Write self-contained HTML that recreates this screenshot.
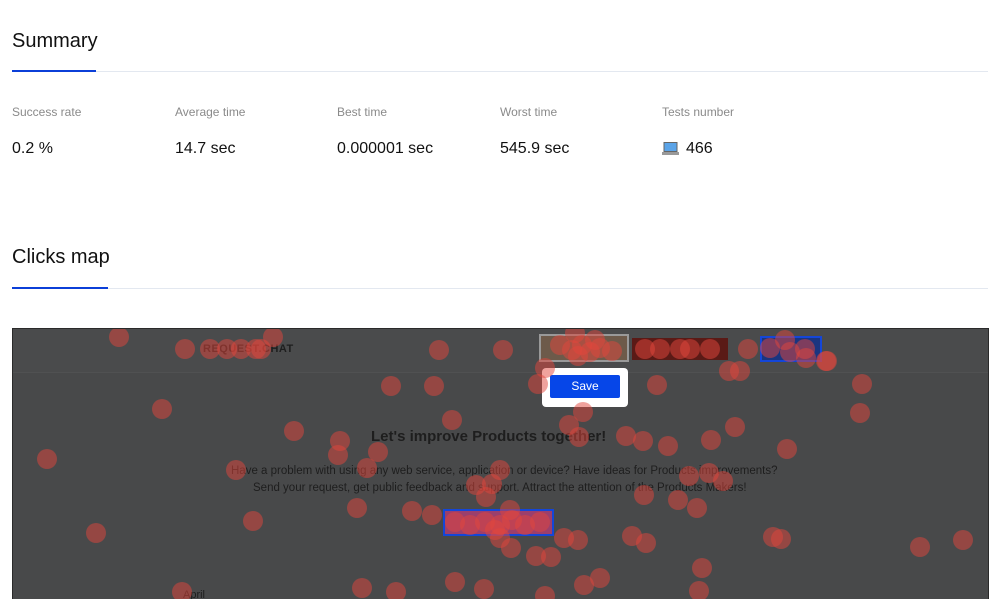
<!DOCTYPE html>
<html><head><meta charset="utf-8">
<style>
*{margin:0;padding:0;box-sizing:border-box}
html,body{width:1000px;height:599px;overflow:hidden}
body{background:#fff;font-family:"Liberation Sans",Arial,sans-serif;position:relative}
.abs{position:absolute}
h2{position:absolute;font-weight:400;font-size:20px;color:#111;left:12px}
.line{position:absolute;left:12px;width:976px;height:1px;background:#e3e8f0}
.ul{position:absolute;left:12px;height:2px;background:#0b3fd8}
.lab{position:absolute;top:105px;font-size:12px;color:#8a8a8a}
.val{position:absolute;top:140px;font-size:16px;color:#111}
#map{position:absolute;left:12px;top:328px;width:977px;height:271px;background:#48494a;border:1px solid #2a2a2a;border-bottom:none;overflow:hidden}
.t{position:absolute;color:#1e1e1e;white-space:nowrap}
</style></head><body>
<h2 style="top:30px">Summary</h2>
<div class="line" style="top:71px"></div><div class="ul" style="top:70px;width:84px"></div>
<div class="lab" style="left:12px">Success rate</div>
<div class="lab" style="left:175px">Average time</div>
<div class="lab" style="left:337px">Best time</div>
<div class="lab" style="left:500px">Worst time</div>
<div class="lab" style="left:662px">Tests number</div>
<div class="val" style="left:12px">0.2 %</div>
<div class="val" style="left:175px">14.7 sec</div>
<div class="val" style="left:337px">0.000001 sec</div>
<div class="val" style="left:500px">545.9 sec</div>
<svg class="abs" style="left:662px;top:142px" width="17" height="13" viewBox="0 0 17 13"><rect x="2" y="0.5" width="13" height="9" fill="#5ba4e8" stroke="#666"/><rect x="0" y="10" width="17" height="3" fill="#999"/></svg>
<div class="val" style="left:686px">466</div>

<h2 style="top:246px">Clicks map</h2>
<div class="line" style="top:288px"></div><div class="ul" style="top:287px;width:96px"></div>

<div id="map">
<div class="abs" style="left:0;top:0;width:977px;height:44px;background:#4a4b4c;border-bottom:1px solid #505152"></div>
<div class="t" style="left:190px;top:14px;font-size:11px;font-weight:700;letter-spacing:.5px">REQUEST.CHAT</div>
<div class="abs" style="left:526px;top:5px;width:90px;height:28px;border:2px solid #999;background:#6d5a4a"></div>
<div class="abs" style="left:619px;top:9px;width:96px;height:22px;background:#5a1a16"></div>
<div class="abs" style="left:747px;top:7px;width:62px;height:26px;border:2px solid #1446d8;background:#1a3580"></div>
<div class="abs" style="left:529px;top:39px;width:86px;height:39px;background:#fff;border-radius:4px"></div>
<div class="abs" style="left:537px;top:46px;width:70px;height:23px;background:#0646e8;border-radius:2px;color:#fff;font-size:12px;text-align:center;line-height:23px">Save</div>
<div class="t" style="left:358px;top:99px;font-size:15px;font-weight:700">Let's improve Products together!</div>
<div class="t" style="left:218px;top:136px;font-size:11.5px">Have a problem with using any web service, application or device? Have ideas for Products improvements?</div>
<div class="t" style="left:240px;top:153px;font-size:11.5px">Send your request, get public feedback and support. Attract the attention of the Products Makers!</div>
<div class="abs" style="left:430px;top:180px;width:111px;height:27px;border:2px solid #1446d8;background:#9b3f6c"></div>
<div class="t" style="left:170px;top:260px;font-size:11px">April</div>
<svg class="abs" style="left:-13px;top:-329px" width="1000" height="940">
<g fill="rgb(225,70,60)" fill-opacity="0.5">
<circle cx="119" cy="337" r="10"/><circle cx="185" cy="349" r="10"/><circle cx="210" cy="349" r="10"/><circle cx="227" cy="349" r="10"/><circle cx="241" cy="349" r="10"/><circle cx="256" cy="349" r="10"/><circle cx="261" cy="349" r="10"/><circle cx="273" cy="337" r="10"/><circle cx="439" cy="350" r="10"/><circle cx="391" cy="386" r="10"/><circle cx="434" cy="386" r="10"/><circle cx="162" cy="409" r="10"/><circle cx="294" cy="431" r="10"/><circle cx="340" cy="441" r="10"/><circle cx="338" cy="455" r="10"/><circle cx="378" cy="452" r="10"/><circle cx="367" cy="468" r="10"/><circle cx="452" cy="420" r="10"/><circle cx="503" cy="350" r="10"/><circle cx="538" cy="384" r="10"/><circle cx="236" cy="470" r="10"/><circle cx="500" cy="470" r="10"/><circle cx="492" cy="484" r="10"/><circle cx="486" cy="497" r="10"/><circle cx="357" cy="508" r="10"/><circle cx="412" cy="511" r="10"/><circle cx="432" cy="515" r="10"/><circle cx="253" cy="521" r="10"/><circle cx="96" cy="533" r="10"/><circle cx="476" cy="485" r="10"/><circle cx="47" cy="459" r="10"/><circle cx="182" cy="592" r="10"/><circle cx="362" cy="588" r="10"/><circle cx="396" cy="592" r="10"/><circle cx="455" cy="582" r="10"/><circle cx="484" cy="589" r="10"/><circle cx="545" cy="596" r="10"/><circle cx="584" cy="585" r="10"/><circle cx="632" cy="536" r="10"/><circle cx="646" cy="543" r="10"/><circle cx="536" cy="556" r="10"/><circle cx="551" cy="557" r="10"/><circle cx="564" cy="538" r="10"/><circle cx="578" cy="540" r="10"/><circle cx="511" cy="548" r="10"/><circle cx="500" cy="538" r="10"/><circle cx="626" cy="436" r="10"/><circle cx="668" cy="446" r="10"/><circle cx="643" cy="441" r="10"/><circle cx="735" cy="427" r="10"/><circle cx="711" cy="440" r="10"/><circle cx="787" cy="449" r="10"/><circle cx="689" cy="476" r="10"/><circle cx="709" cy="473" r="10"/><circle cx="723" cy="481" r="10"/><circle cx="678" cy="500" r="10"/><circle cx="697" cy="508" r="10"/><circle cx="644" cy="495" r="10"/><circle cx="657" cy="385" r="10"/><circle cx="862" cy="384" r="10"/><circle cx="860" cy="413" r="10"/><circle cx="826" cy="361" r="10"/><circle cx="748" cy="349" r="10"/><circle cx="729" cy="371" r="10"/><circle cx="740" cy="371" r="10"/><circle cx="773" cy="537" r="10"/><circle cx="781" cy="539" r="10"/><circle cx="920" cy="547" r="10"/><circle cx="963" cy="540" r="10"/><circle cx="702" cy="568" r="10"/><circle cx="699" cy="591" r="10"/><circle cx="600" cy="578" r="10"/><circle cx="583" cy="412" r="10"/><circle cx="569" cy="425" r="10"/><circle cx="579" cy="437" r="10"/><circle cx="545" cy="368" r="10"/><circle cx="575" cy="333" r="10"/><circle cx="645" cy="349" r="10"/><circle cx="660" cy="349" r="10"/><circle cx="680" cy="349" r="10"/><circle cx="690" cy="349" r="10"/><circle cx="710" cy="349" r="10"/><circle cx="806" cy="358" r="10"/><circle cx="785" cy="340" r="10"/><circle cx="827" cy="361" r="10"/>
<circle cx="560" cy="345" r="10"/><circle cx="572" cy="350" r="10"/><circle cx="582" cy="345" r="10"/><circle cx="590" cy="352" r="10"/><circle cx="600" cy="348" r="10"/><circle cx="612" cy="351" r="10"/><circle cx="578" cy="356" r="10"/><circle cx="595" cy="340" r="10"/>
<circle cx="455" cy="522" r="10"/><circle cx="470" cy="525" r="10"/><circle cx="485" cy="522" r="10"/><circle cx="500" cy="525" r="10"/><circle cx="512" cy="520" r="10"/><circle cx="525" cy="525" r="10"/><circle cx="540" cy="522" r="10"/><circle cx="495" cy="530" r="10"/><circle cx="510" cy="510" r="10"/>
<circle cx="770" cy="348" r="10"/><circle cx="790" cy="352" r="10"/><circle cx="805" cy="349" r="10"/>
</g></svg>
</div>
</body></html>
